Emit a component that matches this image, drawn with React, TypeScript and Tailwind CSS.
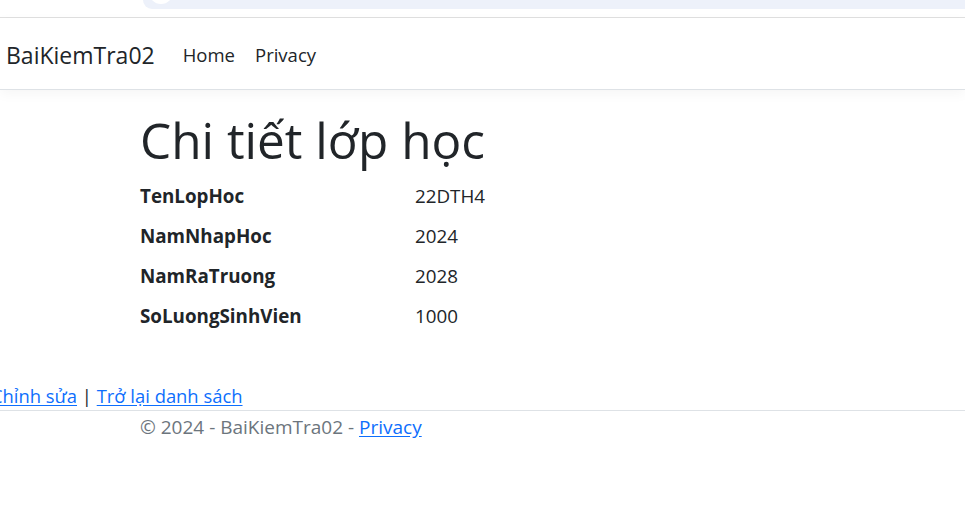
export default function App() {
  const rows = [
    ['TenLopHoc', '22DTH4'],
    ['NamNhapHoc', '2024'],
    ['NamRaTruong', '2028'],
    ['SoLuongSinhVien', '1000'],
  ];

  return (
    <div className="min-h-[510px] bg-white text-[#212529] overflow-hidden" style={{ fontFamily: '"Open Sans", "Noto Sans", sans-serif' }}>
      {/* browser strip */}
      <div className="h-[17px] flex">
        <div className="ml-[143px] flex-1 h-[9px] bg-[#edf1fa] rounded-bl-[10px] relative overflow-hidden">
          <div className="absolute left-[6px] top-[-20px] w-[24px] h-[24px] rounded-full bg-white" />
        </div>
      </div>
      <div className="h-px bg-[#e0e0e0]" />

      {/* navbar */}
      <nav className="h-[72px] pt-[3px] border-b border-[#dee2e6] flex items-center px-[6px] shadow-[0_4px_12px_rgba(0,0,0,0.04)]">
        <a className="text-[23px] leading-none mr-[28px]">BaiKiemTra02</a>
        <div className="flex gap-[20px] text-[18.5px] leading-none">
          <a>Home</a>
          <a>Privacy</a>
        </div>
      </nav>

      {/* main */}
      <main className="pl-[140px] pt-[19px]">
        <h1 className="text-[49.5px] leading-[62px] font-medium mb-[10px]">Chi tiết lớp học</h1>
        <dl className="text-[18.8px]">
          {rows.map(([k, v]) => (
            <div key={k} className="flex leading-[30px] mb-[10px]">
              <dt className="w-[275px] font-bold">{k}</dt>
              <dd>{v}</dd>
            </div>
          ))}
        </dl>
      </main>

      <div className="mt-[50px] -ml-[9px] text-[18.4px] leading-[29px]">
        <a className="text-[#0d6efd] underline underline-offset-2">Chỉnh sửa</a>
        <span> | </span>
        <a className="text-[#0d6efd] underline underline-offset-2">Trở lại danh sách</a>
      </div>

      <footer className="border-t border-[#dee2e6] pl-[140px] text-[19px] leading-[32px] text-[#6c757d]">
        © 2024 - BaiKiemTra02 - <a className="text-[#0d6efd] underline underline-offset-2">Privacy</a>
      </footer>
    </div>
  );
}
